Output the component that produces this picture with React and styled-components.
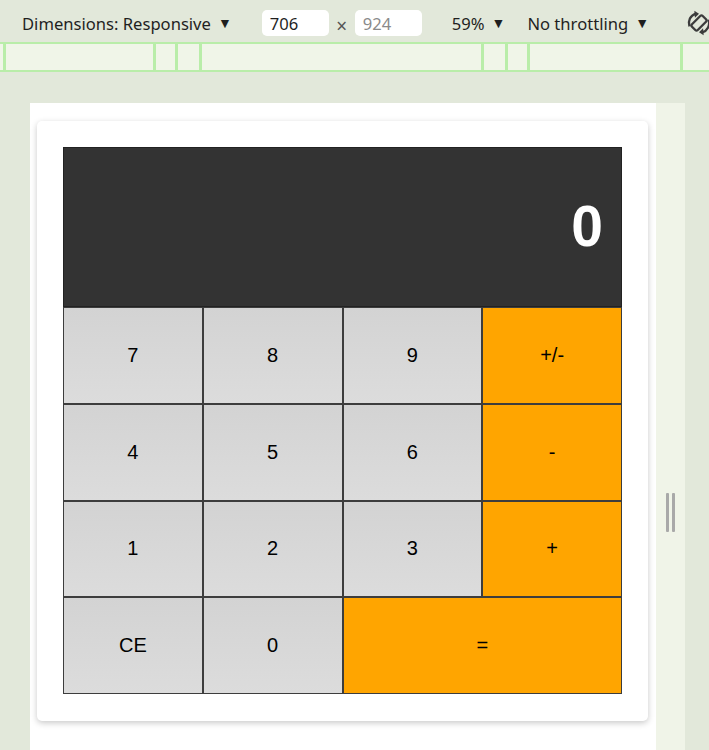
import React from 'react';
import styled, { createGlobalStyle } from 'styled-components';

const GlobalStyle = createGlobalStyle`
  html, body {
    margin: 0;
    padding: 0;
    background: #e2e8da;
    overflow: hidden;
  }
  body {
    font-family: "Noto Sans", "Open Sans", sans-serif;
  }
`;

const Screen = styled.div`
  width: 709px;
  height: 750px;
  display: flex;
  flex-direction: column;
  background: #e2e8da;
  overflow: hidden;
`;

/* devtools device toolbar */
const Toolbar = styled.div`
  height: 42px;
  box-sizing: border-box;
  padding: 4px 0 0 22px;
  display: flex;
  align-items: center;
  color: #1f1f1f;
  font-size: 16.6px;
  white-space: nowrap;
  background: #e2e8da;
  overflow: hidden;

  & > * {
    flex-shrink: 0;
  }
`;

const ToolText = styled.span`
  display: inline-flex;
  align-items: center;
  gap: 7px;
  margin-left: ${(p) => p.$before || 0}px;
`;

const Caret = styled.span`
  font-size: 14px;
  line-height: 1;
`;

const DimInput = styled.div`
  width: 67px;
  height: 26px;
  box-sizing: border-box;
  padding-left: 8px;
  margin-left: ${(p) => p.$before || 0}px;
  display: flex;
  align-items: center;
  background: #fff;
  border-radius: 5px;
  color: ${(p) => (p.$placeholder ? '#8a8a8a' : '#1f1f1f')};
`;

const Times = styled.span`
  width: 26px;
  text-align: center;
  color: #555;
  font-size: 19px;
  padding-top: 5px;
`;

const RotateIcon = styled.svg`
  margin-left: 36px;
`;

const Ruler = styled.div`
  height: 26px;
  border-top: 2px solid #b9eda9;
  border-bottom: 2px solid #b9eda9;
  background: #f0f5e8;
  display: grid;
  grid-template-columns: 3px 150px 22px 24px 282px 24px 22px 153px 1fr;
`;

const RulerCell = styled.div`
  border-left: ${(p) => (p.$first ? 'none' : '3px solid #b9eda9')};
`;

const Stage = styled.div`
  flex: 1;
  display: flex;
  padding: 31px 0 0 30px;
`;

const Page = styled.div`
  width: 626px;
  box-sizing: border-box;
  background: #fff;
  padding: 18px 8px 0 7px;
`;

const HandleStrip = styled.div`
  width: 29px;
  background: #f0f4e8;
  display: flex;
  align-items: center;
  justify-content: center;
  gap: 3px;
  padding-top: 172px;
  box-sizing: border-box;
`;

const HandleBar = styled.div`
  width: 3px;
  height: 39px;
  background: #a9a9a9;
  border-radius: 1px;
`;

/* calculator */
const Card = styled.div`
  background: #fff;
  border-radius: 5px;
  box-shadow: 0 2px 6px rgba(0, 0, 0, 0.22);
  padding: 26px 26px 27px;
`;

const Calculator = styled.div`
  display: flex;
  flex-direction: column;
  font-family: "Liberation Sans", Arial, sans-serif;
`;

const Display = styled.div`
  height: 160px;
  box-sizing: border-box;
  background: #333;
  border: 1px solid #222;
  color: #fff;
  font-weight: bold;
  font-size: 57px;
  display: flex;
  align-items: center;
  justify-content: flex-end;
  padding: 0 18px 2px 0;
`;

const Keys = styled.div`
  display: grid;
  grid-template-columns: repeat(4, 1fr);
  grid-template-rows: repeat(4, 96.75px);
`;

const Key = styled.button`
  grid-column: span ${(p) => p.$span || 1};
  box-sizing: border-box;
  border: 1px solid #3d3d3d;
  margin: 0;
  padding: 0;
  font-family: inherit;
  font-size: 20px;
  color: #000;
  background: ${(p) =>
    p.$accent ? '#ffa500' : 'linear-gradient(#d3d3d3, #dcdcdc)'};
  cursor: pointer;
`;

const keys = [
  { label: '7' },
  { label: '8' },
  { label: '9' },
  { label: '+/-', accent: true },
  { label: '4' },
  { label: '5' },
  { label: '6' },
  { label: '-', accent: true },
  { label: '1' },
  { label: '2' },
  { label: '3' },
  { label: '+', accent: true },
  { label: 'CE' },
  { label: '0' },
  { label: '=', accent: true, span: 2 },
];

const rulerCells = [0, 1, 2, 3, 4, 5, 6, 7, 8];

export default function App() {
  return (
    <Screen>
      <GlobalStyle />
      <Toolbar>
        <ToolText>
          Dimensions: Responsive <Caret>▼</Caret>
        </ToolText>
        <DimInput $before={30}>706</DimInput>
        <Times>×</Times>
        <DimInput $placeholder>924</DimInput>
        <ToolText $before={30}>
          59% <Caret>▼</Caret>
        </ToolText>
        <ToolText $before={22}>
          No throttling <Caret>▼</Caret>
        </ToolText>
        <RotateIcon width="28" height="28" viewBox="0 0 24 24">
          <g fill="none" stroke="#3c3c3c" strokeWidth="2">
            <rect
              x="8.5"
              y="5.5"
              width="7"
              height="13"
              rx="1.5"
              transform="rotate(45 12 12)"
            />
            <path d="M3.8 14.8 A8.5 8.5 0 0 1 9.2 3.9" />
            <path d="M20.2 9.2 A8.5 8.5 0 0 1 14.8 20.1" />
          </g>
          <path d="M8 1.5 L12 4 L8.5 7.5 Z" fill="#3c3c3c" />
          <path d="M16 22.5 L12 20 L15.5 16.5 Z" fill="#3c3c3c" />
        </RotateIcon>
      </Toolbar>

      <Ruler>
        {rulerCells.map((i) => (
          <RulerCell key={i} $first={i === 0} />
        ))}
      </Ruler>

      <Stage>
        <Page>
          <Card>
            <Calculator>
              <Display>0</Display>
              <Keys>
                {keys.map((k) => (
                  <Key key={k.label} $accent={k.accent} $span={k.span}>
                    {k.label}
                  </Key>
                ))}
              </Keys>
            </Calculator>
          </Card>
        </Page>
        <HandleStrip>
          <HandleBar />
          <HandleBar />
        </HandleStrip>
      </Stage>
    </Screen>
  );
}
